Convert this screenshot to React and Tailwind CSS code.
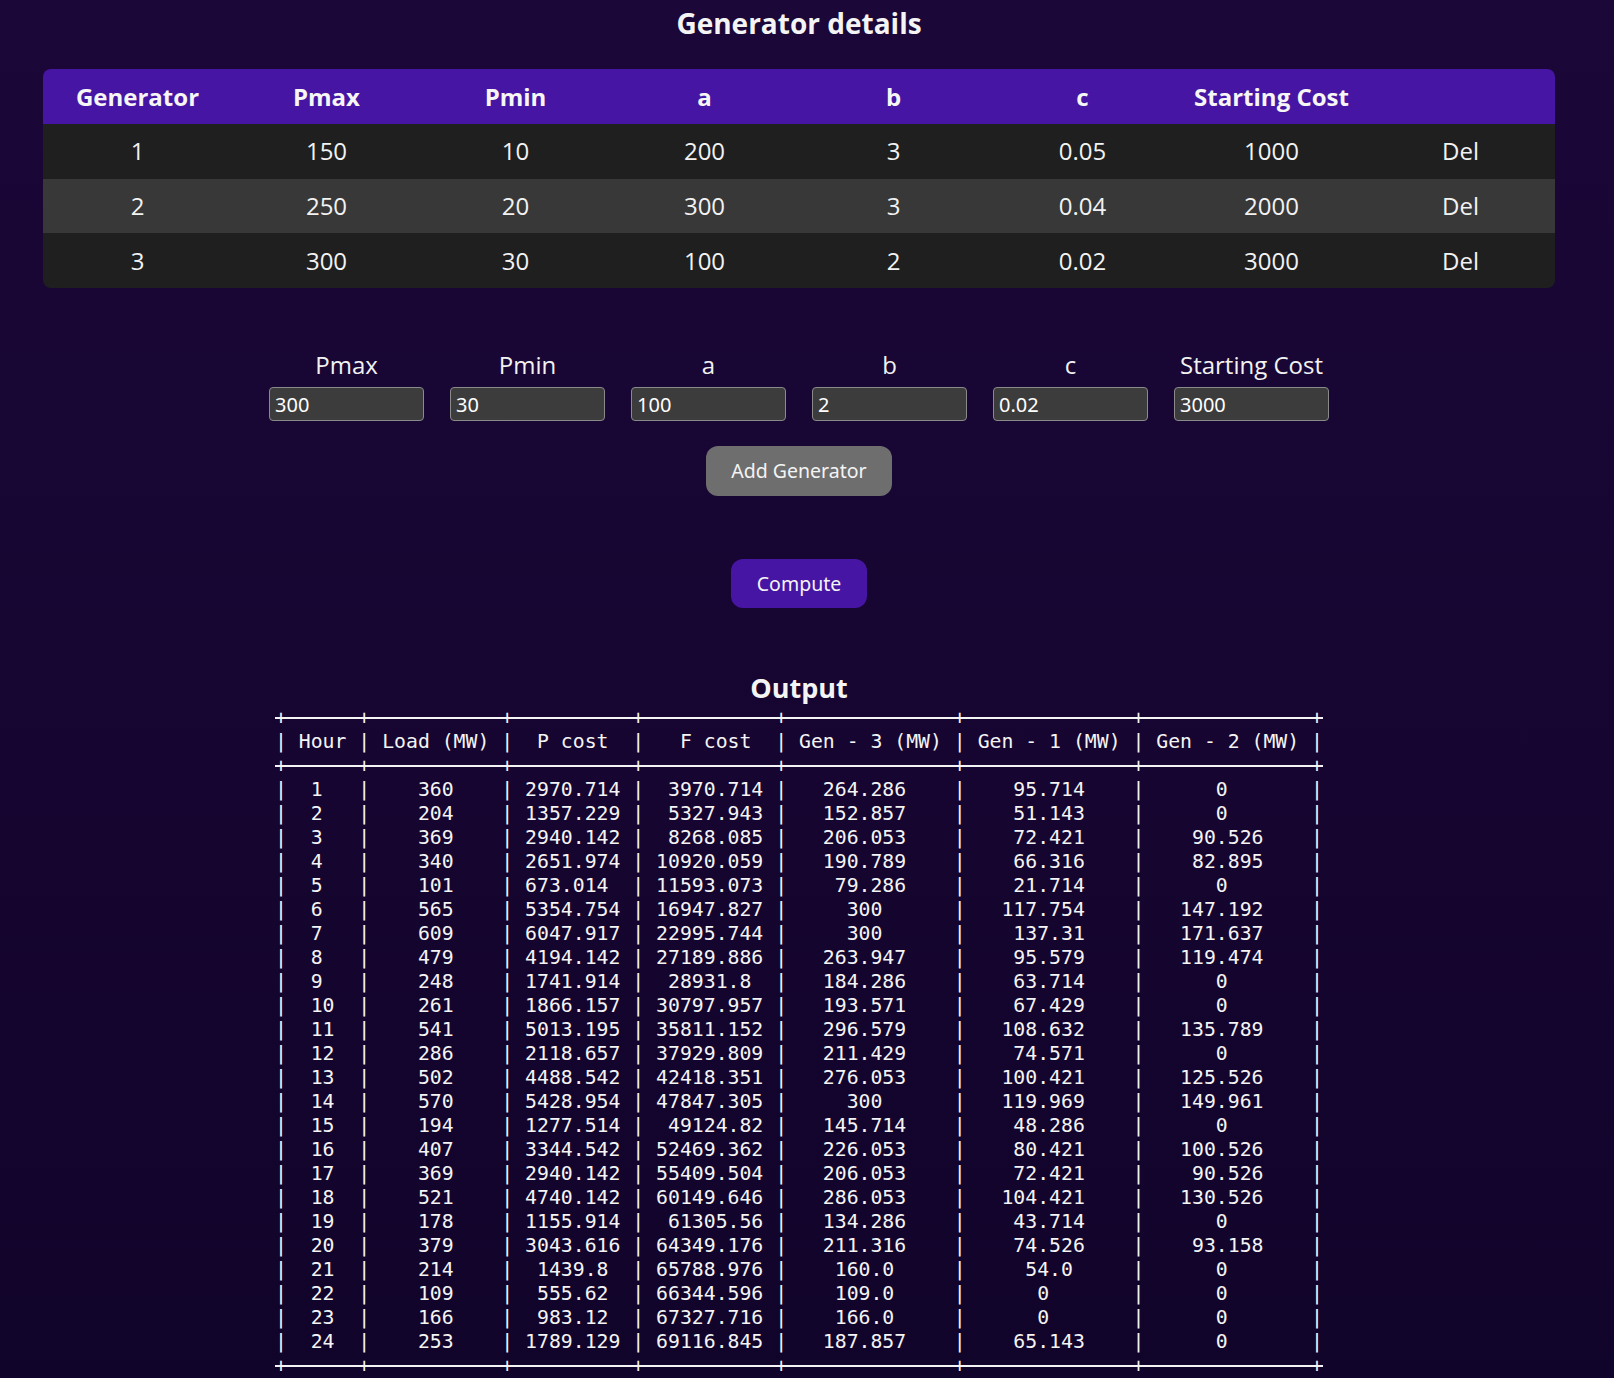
import React from "react";

const gens = [
  ["1", "150", "10", "200", "3", "0.05", "1000"],
  ["2", "250", "20", "300", "3", "0.04", "2000"],
  ["3", "300", "30", "100", "2", "0.02", "3000"],
];

const data = [
  ["1", "360", "2970.714", "3970.714", "264.286", "95.714", "0"],
  ["2", "204", "1357.229", "5327.943", "152.857", "51.143", "0"],
  ["3", "369", "2940.142", "8268.085", "206.053", "72.421", "90.526"],
  ["4", "340", "2651.974", "10920.059", "190.789", "66.316", "82.895"],
  ["5", "101", "673.014", "11593.073", "79.286", "21.714", "0"],
  ["6", "565", "5354.754", "16947.827", "300", "117.754", "147.192"],
  ["7", "609", "6047.917", "22995.744", "300", "137.31", "171.637"],
  ["8", "479", "4194.142", "27189.886", "263.947", "95.579", "119.474"],
  ["9", "248", "1741.914", "28931.8", "184.286", "63.714", "0"],
  ["10", "261", "1866.157", "30797.957", "193.571", "67.429", "0"],
  ["11", "541", "5013.195", "35811.152", "296.579", "108.632", "135.789"],
  ["12", "286", "2118.657", "37929.809", "211.429", "74.571", "0"],
  ["13", "502", "4488.542", "42418.351", "276.053", "100.421", "125.526"],
  ["14", "570", "5428.954", "47847.305", "300", "119.969", "149.961"],
  ["15", "194", "1277.514", "49124.82", "145.714", "48.286", "0"],
  ["16", "407", "3344.542", "52469.362", "226.053", "80.421", "100.526"],
  ["17", "369", "2940.142", "55409.504", "206.053", "72.421", "90.526"],
  ["18", "521", "4740.142", "60149.646", "286.053", "104.421", "130.526"],
  ["19", "178", "1155.914", "61305.56", "134.286", "43.714", "0"],
  ["20", "379", "3043.616", "64349.176", "211.316", "74.526", "93.158"],
  ["21", "214", "1439.8", "65788.976", "160.0", "54.0", "0"],
  ["22", "109", "555.62", "66344.596", "109.0", "0", "0"],
  ["23", "166", "983.12", "67327.716", "166.0", "0", "0"],
  ["24", "253", "1789.129", "69116.845", "187.857", "65.143", "0"],
];

const headers = ["Hour", "Load (MW)", "P cost", "F cost", "Gen - 3 (MW)", "Gen - 1 (MW)", "Gen - 2 (MW)"];
const widths = headers.map((h, i) => Math.max(h.length, ...data.map((r) => r[i].length)));

function just(t, w) {
  const ex = w - t.length;
  if (ex % 2) {
    const h = Math.floor(ex / 2);
    return t.length % 2
      ? " ".repeat(h) + t + " ".repeat(h + 1)
      : " ".repeat(h + 1) + t + " ".repeat(h);
  }
  return " ".repeat(ex / 2) + t + " ".repeat(ex / 2);
}

const border = "+" + widths.map((w) => "-".repeat(w + 2)).join("+") + "+";
const line = (cells) => "|" + cells.map((c, i) => " " + just(c, widths[i]) + " ").join("|") + "|";
const lines = [
  { t: border, b: true },
  { t: line(headers) },
  { t: border, b: true },
  ...data.map((r) => ({ t: line(r) })),
  { t: border, b: true },
];

const fields = [
  ["Pmax", "300"],
  ["Pmin", "30"],
  ["a", "100"],
  ["b", "2"],
  ["c", "0.02"],
  ["Starting Cost", "3000"],
];

export default function App() {
  return (
    <div className="min-h-screen w-full bg-linear-to-b from-[#1b0738] to-[#11042a] text-white">
      <div className="w-[1598px] flex flex-col items-center pt-[5px] pb-[24px]">
        <h1 className="font-['Open_Sans',sans-serif] font-bold text-[28px] leading-[36px] text-[#f4f4f4]">
          Generator details
        </h1>

        <div className="mt-[28px] w-[1512px] rounded-[8px] overflow-hidden">
          <table className="w-full table-fixed border-collapse font-['Open_Sans',sans-serif]">
            <thead>
              <tr className="h-[55px] bg-[#4615a3]">
                {["Generator", "Pmax", "Pmin", "a", "b", "c", "Starting Cost", ""].map((h, i) => (
                  <th key={i} className="text-center font-bold text-[24px] text-[#f6f6f6] p-0">
                    {h}
                  </th>
                ))}
              </tr>
            </thead>
            <tbody>
              {gens.map((r, i) => (
                <tr key={i} className={`h-[54.7px] ${i % 2 === 1 ? "bg-[#383838]" : "bg-[#1f1f1f]"}`}>
                  {r.map((c, j) => (
                    <td key={j} className="text-center text-[24px] font-normal text-[#f2f2f2] p-0">
                      {c}
                    </td>
                  ))}
                  <td className="text-center text-[24px] text-[#f2f2f2] p-0">Del</td>
                </tr>
              ))}
            </tbody>
          </table>
        </div>

        <div className="mt-[62px] grid grid-cols-[repeat(6,155px)] gap-x-[26px] gap-y-[7px]">
          {fields.map(([l]) => (
            <div key={l} className="text-center font-['Open_Sans',sans-serif] text-[24px] leading-[30px] text-[#f2f2f2]">
              {l}
            </div>
          ))}
          {fields.map(([l, v]) => (
            <input
              key={l + "i"}
              defaultValue={v}
              className="h-[34px] w-[155px] bg-[#3c3c3c] border border-[#8a8a8a] rounded-[4px] px-[5px] text-[20px] font-['Noto_Sans',sans-serif] text-white outline-none"
            />
          ))}
        </div>

        <button className="mt-[25px] w-[186px] h-[50px] rounded-[12px] bg-[#6e6e6e] text-[19.5px] font-['Noto_Sans',sans-serif] text-[#f4f4f4]">
          Add Generator
        </button>

        <button className="mt-[63px] w-[136px] h-[49px] rounded-[12px] bg-[#4615a3] text-[19.5px] font-['Noto_Sans',sans-serif] text-[#f4f4f4]">
          Compute
        </button>

        <h2 className="mt-[64px] font-['Open_Sans',sans-serif] font-bold text-[27px] leading-[32px] text-[#f4f4f4]">
          Output
        </h2>

        <pre className="m-0 mt-[2px] font-['DejaVu_Sans_Mono',monospace] text-[19.8px] leading-[24px] text-[#f4f4f4]">
          {lines.map((l, i) => (
            <span key={i} className={`block ${l.b ? "line-through decoration-2 decoration-[#f4f4f4]" : ""}`}>
              {l.t}
            </span>
          ))}
        </pre>
      </div>
    </div>
  );
}
